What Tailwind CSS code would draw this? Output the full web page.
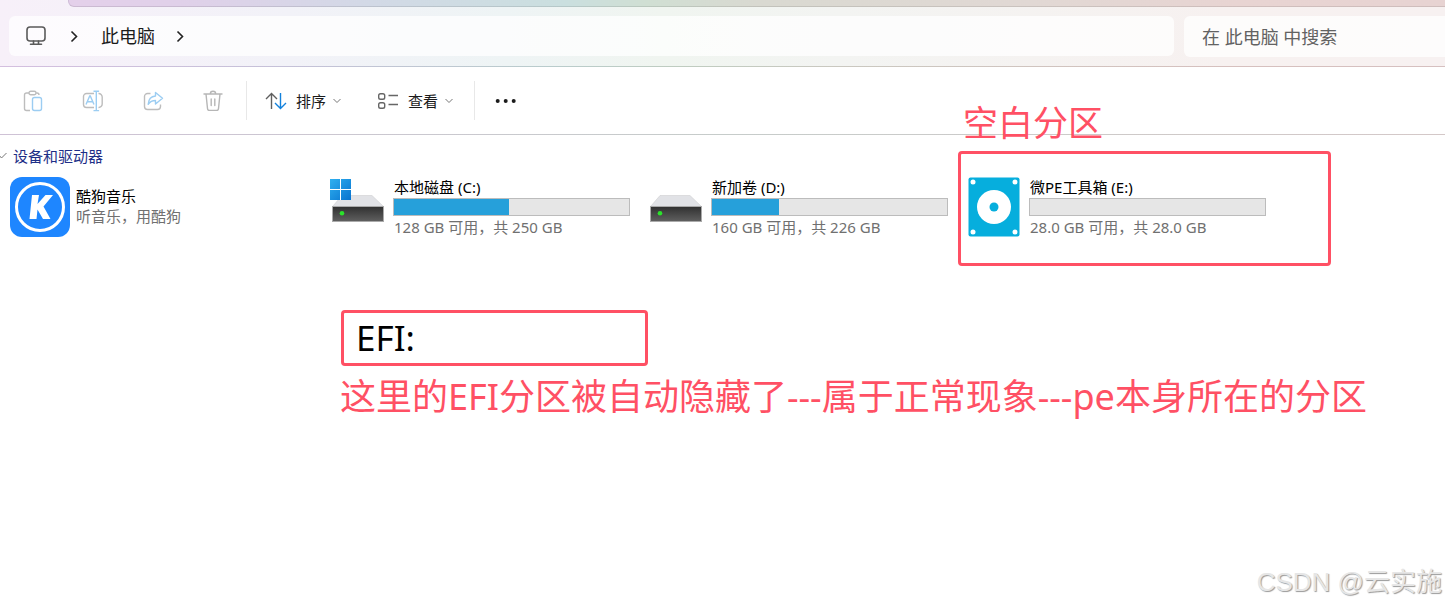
<!DOCTYPE html>
<html lang="zh-CN">
<head>
<meta charset="utf-8">
<meta name="viewport" content="width=device-width, initial-scale=1">
<title>此电脑</title>
<script src="https://cdn.jsdelivr.net/npm/@tailwindcss/browser@4"></script>
</head>
<body class="relative min-h-screen overflow-x-hidden bg-white font-['Noto_Sans','Noto_Sans_CJK_SC',sans-serif] text-[15px] leading-5 text-black">

<!-- Title strip and address bar -->
<header class="bg-[linear-gradient(to_right,#f7f0f9_0%,#f2f2f8_20%,#eef4f5_35%,#f0f5f0_46%,#f3f4f2_58%,#f7f1f0_85%,#f7f1f1_100%)]">
  <div class="ml-17 h-[7px] rounded-bl-md border-b border-l border-b-black/10 border-l-[#cfbcd8] bg-[linear-gradient(to_right,#e4d0ea_0%,#e0d0e9_8%,#d2d9e6_22%,#cadfdf_36%,#d0dfd3_42%,#d9d9d1_50%,#e1d8d4_70%,#e8d4d2_85%,#e7d3d2_100%)]"></div>
  <div class="flex gap-[10px] pt-[9px] pb-[9px] pl-[9px]">
    <nav aria-label="地址栏" class="flex h-10 flex-1 items-center rounded-md bg-white/75 pl-4 text-lg text-[#1b1b1b]">
      <svg class="h-6 w-[22px]" viewBox="0 0 22 24" fill="none" stroke="#5a5a5a" stroke-width="1.6"><rect x="2" y="3" width="18" height="14" rx="3"/><path d="M8.500 17v3M13.500 17v3M5.500 20.300h11" stroke-linecap="round"/></svg>
      <svg class="ml-[19px] h-4 w-4" viewBox="0 0 16 16" fill="none" stroke="#222" stroke-width="1.6"><path d="M5.500 3.500 10.500 8.500l-5 5"/></svg>
      <a href="#" class="ml-[19px]">此电脑</a>
      <svg class="ml-[17px] h-4 w-4" viewBox="0 0 16 16" fill="none" stroke="#222" stroke-width="1.6"><path d="M5.500 3.500 10.500 8.500l-5 5"/></svg>
    </nav>
    <input type="text" aria-label="搜索" placeholder="在 此电脑 中搜索" class="h-[41px] w-[261px] rounded-l-md bg-white/75 pl-[18px] text-lg outline-none placeholder:text-[#626262]">
  </div>
  <div class="h-px bg-[linear-gradient(to_right,#d4bfdf_0%,#c5c1d8_20%,#b9cccc_38%,#bfccc0_47%,#cac8c0_58%,#d6c0be_85%,#d6c0c0_100%)]"></div>
</header>

<!-- Command bar -->
<div role="toolbar" aria-label="命令栏" class="flex h-[67px] items-center pl-[21px] text-[#1b1b1b]">
  <div class="flex gap-9">
    <button aria-label="粘贴" class="h-6 w-6"><svg viewBox="0 0 24 24" class="h-6 w-6" fill="none" stroke-width="1.400"><path stroke="#bdbdbd" d="M8 4H5.500A2 2 0 0 0 3.500 6v13.500a2 2 0 0 0 2 2H9M14.500 4H16a2 2 0 0 1 2 2M8 4a1.700 1.700 0 0 1 1.700-1.700h3.600a1.700 1.700 0 0 1 0 3.400H9.700A1.700 1.700 0 0 1 8 4Z"/><rect stroke="#9ccdf2" x="11.500" y="8.500" width="9" height="13" rx="2"/></svg></button>
    <button aria-label="重命名" class="h-6 w-6"><svg viewBox="0 0 24 24" class="h-6 w-6" fill="none" stroke-width="1.400"><path stroke="#bdbdbd" d="M13 4.500H5.500A3 3 0 0 0 2.500 7.500v8a3 3 0 0 0 3 3H13M17.500 4.500a3.500 3.500 0 0 1 3.700 3.500v7a3.500 3.500 0 0 1-3.700 3.500"/><path stroke="#9ccdf2" d="M5 15.500 8.700 7h.6L13 15.500M6.300 12.700h5.400M15.300 2.500v19M12.500 2.200h5.600M12.500 21.600h5.600"/></svg></button>
    <button aria-label="共享" class="h-6 w-6"><svg viewBox="0 0 24 24" class="h-6 w-6" fill="none" stroke-width="1.400" stroke-linejoin="round"><path stroke="#bdbdbd" d="M9.500 4.500H6.500A3 3 0 0 0 3.500 7.500v10a3 3 0 0 0 3 3h10a3 3 0 0 0 3-3V15.500"/><path stroke="#9ccdf2" d="M14.500 3.500 21.500 9.300l-7 5.700v-3.500c-3.500 0-5.500 1.200-7.300 3.800.3-5 2.800-8 7.300-8.300Z"/></svg></button>
    <button aria-label="删除" class="h-6 w-6"><svg viewBox="0 0 24 24" class="h-6 w-6" fill="none" stroke="#b6b6b6" stroke-width="1.400" stroke-linecap="round"><path d="M3 5h18M5 5l1.500 14.500a2 2 0 0 0 2 1.900h7a2 2 0 0 0 2-1.900L19 5M9.300 5a2.700 2.700 0 0 1 5.400 0M10.200 10v6.500M13.800 10v6.500"/></svg></button>
  </div>
  <div class="ml-[21px] h-[39px] w-px bg-[#e8e8e8]"></div>
  <button class="ml-[18px] flex items-center">
    <svg viewBox="0 0 22 22" class="h-[22px] w-[22px]" fill="none" stroke-width="1.400"><path stroke="#5f5f5f" d="M6.500 19V3.500M1 9l5.500-5.500L12 9"/><path stroke="#1281dc" d="M15.500 3v15.500M10 13l5.500 5.500L21 13"/></svg>
    <span class="ml-[9px]">排序</span>
    <svg viewBox="0 0 10 10" class="ml-[6px] h-[10px] w-[10px]" fill="none" stroke="#777"><path d="M1.500 3 5 6.500 8.500 3"/></svg>
  </button>
  <button class="ml-[35px] flex items-center">
    <svg viewBox="0 0 22 22" class="h-[22px] w-[22px]" fill="none" stroke="#666" stroke-width="1.400"><rect x="1.700" y="3.700" width="6" height="5.600" rx="1.800"/><rect x="1.700" y="12.700" width="6" height="5.600" rx="1.800"/><path d="M11.500 5.500H21M11.500 14.500H21"/></svg>
    <span class="ml-[9px]">查看</span>
    <svg viewBox="0 0 10 10" class="ml-[6px] h-[10px] w-[10px]" fill="none" stroke="#777"><path d="M1.500 3 5 6.500 8.500 3"/></svg>
  </button>
  <div class="ml-5 h-[39px] w-px bg-[#e8e8e8]"></div>
  <button aria-label="更多" class="ml-5"><svg viewBox="0 0 22 6" class="h-[6px] w-[22px]" fill="#1b1b1b"><circle cx="2.700" cy="3" r="2"/><circle cx="10.700" cy="3" r="2"/><circle cx="18.700" cy="3" r="2"/></svg></button>
</div>
<div class="h-px bg-linear-to-r from-[#cfc2d6] via-[#c6ccca] to-[#d4c8c8]"></div>

<!-- Devices and drives -->
<main>
  <h2 class="flex h-[42px] items-center text-[#1e2f87]">
    <svg viewBox="0 0 8 10" class="mr-[5px] h-[10px] w-2" fill="none" stroke="#777"><path d="M-2 3 1.500 7 6.500 2"/></svg>
    设备和驱动器
  </h2>
  <div class="flex pl-[10px]">
    <article class="flex w-[320px] gap-[6px]">
      <svg viewBox="0 0 60 60" class="h-[60px] w-[60px]"><rect width="60" height="60" rx="12" fill="#1e86ff"/><circle cx="30" cy="30" r="23.500" fill="none" stroke="#fff" stroke-width="3"/><path fill="#fff" d="M22 18h7l-1.500 9L35.500 18H43L33.500 29.500 40.500 42H33l-5.500-9.500L26.500 42h-7Z"/></svg>
      <div class="pt-[9px]"><h3>酷狗音乐</h3><p class="text-[#707070]">听音乐，用酷狗</p></div>
    </article>
    <article class="flex w-[318px] gap-2">
      <svg viewBox="0 0 55 60" class="h-[60px] w-[55px]"><defs><linearGradient id="body" x1="0" y1="0" x2="0" y2="1"><stop stop-color="#303030"/><stop offset="1" stop-color="#606060"/></linearGradient><linearGradient id="win" x1="0" y1="0" x2="1" y2="1"><stop stop-color="#2fb0f0"/><stop offset="1" stop-color="#0873cf"/></linearGradient></defs><path fill="#e1e2e6" stroke="#c8c8cb" stroke-width=".5" d="M12 18.500h30L53.500 29.500h-51Z"/><rect x="2.500" y="29.500" width="51" height="15" fill="url(#body)" stroke="#aaa"/><circle cx="12" cy="36.300" r="2.300" fill="#2be32b"/><path fill="#fff" d="M0 2h21v21H0z"/><path fill="url(#win)" d="M0 2h10v10H0zM11 2h10v10H11zM0 13h10v10H0zM11 13h10v10H11z"/></svg>
      <div><h3 class="pl-px">本地磁盘 (C:)</h3><div class="my-px h-[18px] w-[237px] border border-[#bcbcbc] bg-[#e6e6e6]"><div class="h-full bg-[#26a0da]" style="width:49%"></div></div><p class="pl-px text-[#707070]">128 GB 可用，共 250 GB</p></div>
    </article>
    <article class="flex w-[318px] gap-2">
      <svg viewBox="0 0 55 60" class="h-[60px] w-[55px]"><path fill="#e1e2e6" stroke="#c8c8cb" stroke-width=".5" d="M12 18.500h30L53.500 29.500h-51Z"/><rect x="2.500" y="29.500" width="51" height="15" fill="url(#body)" stroke="#aaa"/><circle cx="12" cy="36.300" r="2.300" fill="#2be32b"/></svg>
      <div><h3 class="pl-px">新加卷 (D:)</h3><div class="my-px h-[18px] w-[237px] border border-[#bcbcbc] bg-[#e6e6e6]"><div class="h-full bg-[#26a0da]" style="width:28.5%"></div></div><p class="pl-px text-[#707070]">160 GB 可用，共 226 GB</p></div>
    </article>
    <article class="flex w-[318px] gap-2">
      <svg viewBox="0 0 55 60" class="h-[60px] w-[55px]"><rect x="2.500" y=".5" width="51" height="59" rx="2" fill="#06aedd"/><circle cx="28" cy="30" r="17" fill="#fff"/><circle cx="28" cy="30" r="4.500" fill="#06aedd"/><g fill="#fff"><circle cx="7" cy="5" r="2.500"/><circle cx="49" cy="5" r="2.500"/><circle cx="7" cy="55" r="2.500"/><circle cx="49" cy="55" r="2.500"/></g></svg>
      <div><h3 class="pl-px">微PE工具箱 (E:)</h3><div class="my-px h-[18px] w-[237px] border border-[#bcbcbc] bg-[#e6e6e6]"></div><p class="pl-px text-[#707070]">28.0 GB 可用，共 28.0 GB</p></div>
    </article>
  </div>
  <section class="mt-[73px] pl-[340px] leading-[50px]">
    <div class="ml-px h-14 w-[307px] rounded-sm border-3 border-[#ff5064] pl-3 text-[35px]">EFI:</div>
    <p class="mt-[6px] text-4xl leading-[50px] whitespace-nowrap text-[#ff5064]">这里的EFI分区被自动隐藏了---属于正常现象---pe本身所在的分区</p>
  </section>
</main>

<!-- Annotations over the window -->
<div class="absolute top-[98px] left-[963px] text-[35px] leading-[50px] text-[#ff5064]">空白分区</div>
<div class="absolute top-[151px] left-[958px] h-[115px] w-[373px] rounded-sm border-3 border-[#ff5064]"></div>
<div class="absolute right-[3px] bottom-[6px] font-['Liberation_Sans','Noto_Sans_CJK_SC',sans-serif] text-[26px] leading-10 text-[#e6e6e6] [text-shadow:1px_1px_1px_#999]">CSDN @云实施</div>
</body>
</html>
